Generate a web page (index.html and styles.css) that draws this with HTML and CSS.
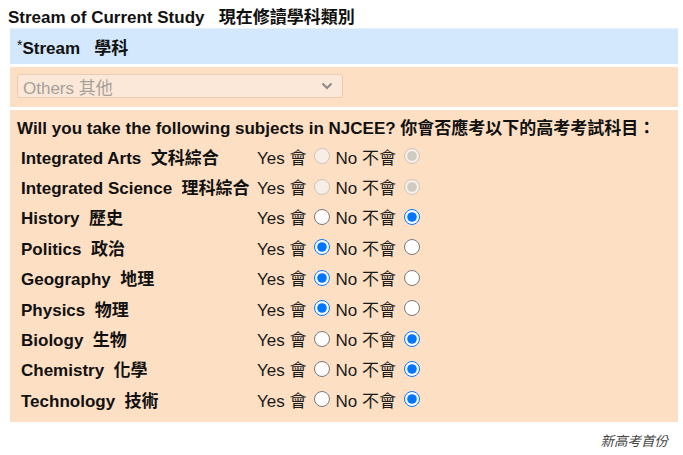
FILE: index.html
```html
<!DOCTYPE html>
<html lang="zh-Hant">
<head>
<meta charset="utf-8">
<title>Stream of Current Study</title>
<link rel="stylesheet" href="styles.css">
</head>
<body>
<div class="page">
  <h1 class="title">Stream of Current Study&nbsp;&nbsp; 現在修讀學科類別</h1>
  <div class="panel panel-blue"><span class="ast">*</span>Stream&nbsp;&nbsp; 學科</div>
  <div class="panel panel-orange panel-select">
    <div class="select">
      <span>Others 其他</span>
      <svg class="chev" width="12" height="8" viewBox="0 0 12 8"><path d="M1.5 1.5 L6 6 L10.5 1.5" fill="none" stroke="#8a8a8a" stroke-width="2"/></svg>
    </div>
  </div>
  <div class="panel panel-orange panel-q">
    <div class="question">Will you take the following subjects in NJCEE? 你會否應考以下的高考考試科目：</div>
    <div class="grid">
      <div class="row"><div class="label">Integrated Arts&nbsp; 文科綜合</div><div class="opts"><span>Yes 會</span><input type="radio" name="r1" disabled><span>No 不會</span><input type="radio" name="r1" disabled checked></div></div>
      <div class="row"><div class="label">Integrated Science&nbsp; 理科綜合</div><div class="opts"><span>Yes 會</span><input type="radio" name="r2" disabled><span>No 不會</span><input type="radio" name="r2" disabled checked></div></div>
      <div class="row"><div class="label">History&nbsp; 歷史</div><div class="opts"><span>Yes 會</span><input type="radio" name="r3"><span>No 不會</span><input type="radio" name="r3" checked></div></div>
      <div class="row"><div class="label">Politics&nbsp; 政治</div><div class="opts"><span>Yes 會</span><input type="radio" name="r4" checked><span>No 不會</span><input type="radio" name="r4"></div></div>
      <div class="row"><div class="label">Geography&nbsp; 地理</div><div class="opts"><span>Yes 會</span><input type="radio" name="r5" checked><span>No 不會</span><input type="radio" name="r5"></div></div>
      <div class="row"><div class="label">Physics&nbsp; 物理</div><div class="opts"><span>Yes 會</span><input type="radio" name="r6" checked><span>No 不會</span><input type="radio" name="r6"></div></div>
      <div class="row"><div class="label">Biology&nbsp; 生物</div><div class="opts"><span>Yes 會</span><input type="radio" name="r7"><span>No 不會</span><input type="radio" name="r7" checked></div></div>
      <div class="row"><div class="label">Chemistry&nbsp; 化學</div><div class="opts"><span>Yes 會</span><input type="radio" name="r8"><span>No 不會</span><input type="radio" name="r8" checked></div></div>
      <div class="row"><div class="label">Technology&nbsp; 技術</div><div class="opts"><span>Yes 會</span><input type="radio" name="r9"><span>No 不會</span><input type="radio" name="r9" checked></div></div>
    </div>
  </div>
  <div class="footer">新高考首份</div>
</div>
</body>
</html>
```

FILE: styles.css
```css
html, body {
  margin: 0;
  padding: 0;
  background: #ffffff;
}
body {
  font-family: "Liberation Sans", "Noto Sans CJK TC", sans-serif;
  font-size: 17px;
  color: #111;
}
.page {
  display: flex;
  flex-direction: column;
  padding: 0 5px 0 10px;
}
.title {
  margin: 0 0 0 -2px;
  height: 28px;
  box-sizing: border-box;
  padding-top: 3px;
  font-size: 17px;
  font-weight: bold;
  display: flex;
  align-items: center;
  white-space: nowrap;
}
.panel {
  box-sizing: border-box;
}
.panel-blue {
  background: #d3e8fd;
  height: 36px;
  display: flex;
  align-items: center;
  padding-left: 7px;
  font-weight: bold;
  border-top: 1px solid #e4f0fd;
}
.ast {
  font-weight: normal;
  font-size: 14px;
  margin-top: -4px;
}
.panel-orange {
  background: #fddfc3;
}
.panel-select {
  margin-top: 3px;
  height: 40px;
  padding: 7px 0 0 7px;
}
.select {
  box-sizing: border-box;
  width: 326px;
  height: 24px;
  border: 1px solid #e8cdb3;
  border-radius: 3px;
  background: #fbe8d8;
  color: #a6a09a;
  display: flex;
  align-items: center;
  justify-content: space-between;
  padding: 0 9px 0 5px;
  font-size: 17px;
}
.chev {
  display: block;
}
.panel-q {
  margin-top: 3px;
  padding: 1px 0 7px 7px;
  height: 312px;
}
.question {
  height: 30px;
  display: flex;
  align-items: center;
  font-weight: bold;
  white-space: nowrap;
}
.grid {
  display: flex;
  flex-direction: column;
}
.row {
  height: 30.4px;
  display: grid;
  grid-template-columns: 236px auto;
  align-items: center;
  padding-left: 4px;
}
.label {
  font-weight: bold;
  white-space: nowrap;
}
.opts {
  display: flex;
  align-items: center;
  white-space: nowrap;
  color: #1a1a1a;
}
.opts input {
  width: 16px;
  height: 16px;
  margin: 0 5px 0 8px;
}
.footer {
  align-self: flex-end;
  margin: 8px 10px 0 0;
  font-size: 13.5px;
  font-style: italic;
  color: #444;
}
```
